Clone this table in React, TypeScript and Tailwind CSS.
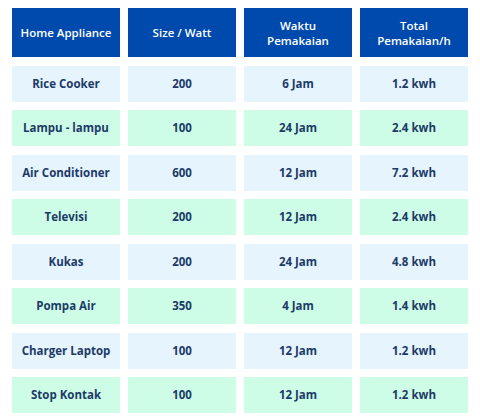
import React from "react";

const rows = [
  ["Rice Cooker", "200", "6 Jam", "1.2 kwh"],
  ["Lampu - lampu", "100", "24 Jam", "2.4 kwh"],
  ["Air Conditioner", "600", "12 Jam", "7.2 kwh"],
  ["Televisi", "200", "12 Jam", "2.4 kwh"],
  ["Kukas", "200", "24 Jam", "4.8 kwh"],
  ["Pompa Air", "350", "4 Jam", "1.4 kwh"],
  ["Charger Laptop", "100", "12 Jam", "1.2 kwh"],
  ["Stop Kontak", "100", "12 Jam", "1.2 kwh"],
];

const headers = ["Home Appliance", "Size / Watt", "Waktu\nPemakaian", "Total\nPemakaian/h"];

export default function App() {
  return (
    <div className="w-[480px] h-[420px] bg-white pt-[8px] pl-[12px] font-['Open_Sans',sans-serif]">
      <div className="grid grid-cols-[108px_108px_108px_108px] gap-x-2 gap-y-[8.5px]">
        {headers.map((h) => (
          <div
            key={h}
            className="h-[49px] bg-[#004aad] text-white text-[11.5px] font-semibold leading-[15px] flex items-center justify-center text-center whitespace-pre-line"
          >
            {h}
          </div>
        ))}
        {rows.map((r, i) =>
          r.map((c, j) => (
            <div
              key={`${i}-${j}`}
              className={`h-[36px] flex items-center justify-center text-[11.5px] font-bold text-[#1c3a68] ${
                i % 2 === 0 ? "bg-[#e6f4fd]" : "bg-[#cdfde6]"
              }`}
            >
              {c}
            </div>
          ))
        )}
      </div>
    </div>
  );
}
